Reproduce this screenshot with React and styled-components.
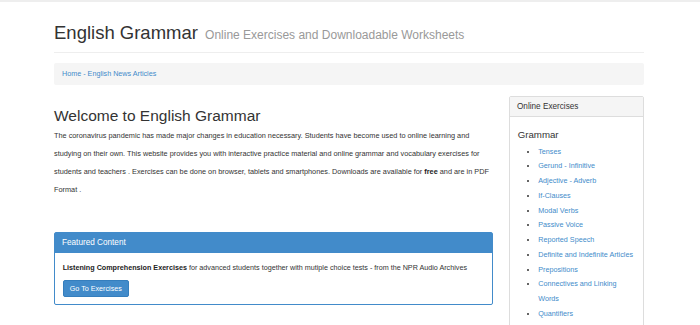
import React from 'react';
import styled, { createGlobalStyle } from 'styled-components';

const GlobalStyle = createGlobalStyle`
html, body {
  margin: 0;
  padding: 0;
  overflow: hidden;
  background: #fff;
}
body {
  font-family: "Liberation Sans", Arial, sans-serif;
  color: #333;
  border-top: 2px solid #eeeeee;
}
`;

const Page = styled.div`
width: 590px;
padding-left: 54px;
`;

const PageHeader = styled.div`
padding-top: 21px;
padding-bottom: 9px;
border-bottom: 1px solid #eee;
`;

const Title = styled.h1`
margin: 0;
font-size: 18.5px;
line-height: 1.1;
font-weight: 400;
color: #333;
small {
  font-size: 12px;
  color: #999;
  margin-left: 2px;
}
`;

const Breadcrumb = styled.div`
margin-top: 10px;
height: 22px;
line-height: 22px;
padding: 0 8px;
background: #f5f5f5;
border-radius: 2px;
font-size: 7.2px;
a { color: #428bca; text-decoration: none; }
span { color: #428bca; margin: 0 2px; }
`;

const Row = styled.div`
display: grid;
grid-template-columns: 439px 135px;
column-gap: 16px;
margin-top: 11px;
align-items: start;
`;

const Main = styled.div``;

const Heading = styled.h2`
margin: 11px 0 0;
font-size: 15.5px;
line-height: 1.1;
font-weight: 400;
`;

const Lead = styled.p`
margin: 3px 0 0;
font-size: 7.32px;
line-height: 18px;
b { font-weight: 700; color: #222; }
`;

const Panel = styled.div`
margin-top: ${p => p.$top || 0}px;
border: 1px solid ${p => (p.$primary ? '#428bca' : '#ddd')};
border-radius: 2px;
background: #fff;
`;

const PanelHead = styled.div`
height: 19px;
line-height: 19px;
padding: 0 7px;
background: ${p => (p.$primary ? '#428bca' : '#f5f5f5')};
color: ${p => (p.$primary ? '#fff' : '#333')};
border-bottom: 1px solid ${p => (p.$primary ? '#428bca' : '#ddd')};
font-size: 8.2px;
`;

const PanelBody = styled.div`
padding: ${p => (p.$tight ? '8px 7.7px 7px' : '7px 7.7px 7px')};
`;

const BodyText = styled.p`
margin: 0 0 5px;
font-size: 7.2px;
line-height: 14px;
b { font-weight: 700; color: #222; }
`;

const Button = styled.button`
display: block;
height: 17px;
padding: 0 6px;
font-family: inherit;
font-size: 7.2px;
color: #fff;
background: #428bca;
border: 1px solid #357ebd;
border-radius: 2px;
cursor: pointer;
`;

const SideTitle = styled.h4`
margin: 6px 0 0;
font-size: 9.7px;
line-height: 1.1;
font-weight: 400;
`;

const List = styled.ul`
margin: 3.6px 0 0;
padding-left: 20.6px;
list-style: disc;
font-size: 7.2px;
line-height: 14.75px;
li::marker { color: #333; }
a { color: #428bca; text-decoration: none; }
`;

const grammar = [
  'Tenses',
  'Gerund - Infinitive',
  'Adjective - Adverb',
  'If-Clauses',
  'Modal Verbs',
  'Passive Voice',
  'Reported Speech',
  'Definite and Indefinite Articles',
  'Prepositions',
  'Connectives and Linking Words',
  'Quantifiers',
  'Questions and Negatives',
  'Relative Clauses',
  'Word Order',
];

export default function App() {
  return (
    <>
      <GlobalStyle />
      <Page>
        <PageHeader>
          <Title>
            English Grammar <small>Online Exercises and Downloadable Worksheets</small>
          </Title>
        </PageHeader>
        <Breadcrumb>
          <a href="#">Home</a>
          <span>-</span>
          <a href="#">English News Articles</a>
        </Breadcrumb>
        <Row>
          <Main>
            <Heading>Welcome to English Grammar</Heading>
            <Lead>
              The coronavirus pandemic has made major changes in education necessary. Students have become used to online learning and studying on their own. This website provides you with interactive practice material and online grammar and vocabulary exercises for students and teachers . Exercises can be done on browser, tablets and smartphones. Downloads are available for <b>free</b> and are in PDF Format .
            </Lead>
            <Panel $primary $top={33}>
              <PanelHead $primary>Featured Content</PanelHead>
              <PanelBody $tight>
                <BodyText>
                  <b>Listening Comprehension Exercises</b> for advanced students together with mutiple choice tests - from the NPR Audio Archives
                </BodyText>
                <Button>Go To Exercises</Button>
              </PanelBody>
            </Panel>
          </Main>
          <Panel>
            <PanelHead>Online Exercises</PanelHead>
            <PanelBody>
              <SideTitle>Grammar</SideTitle>
              <List>
                {grammar.map(g => (
                  <li key={g}><a href="#">{g}</a></li>
                ))}
              </List>
            </PanelBody>
          </Panel>
        </Row>
      </Page>
    </>
  );
}
